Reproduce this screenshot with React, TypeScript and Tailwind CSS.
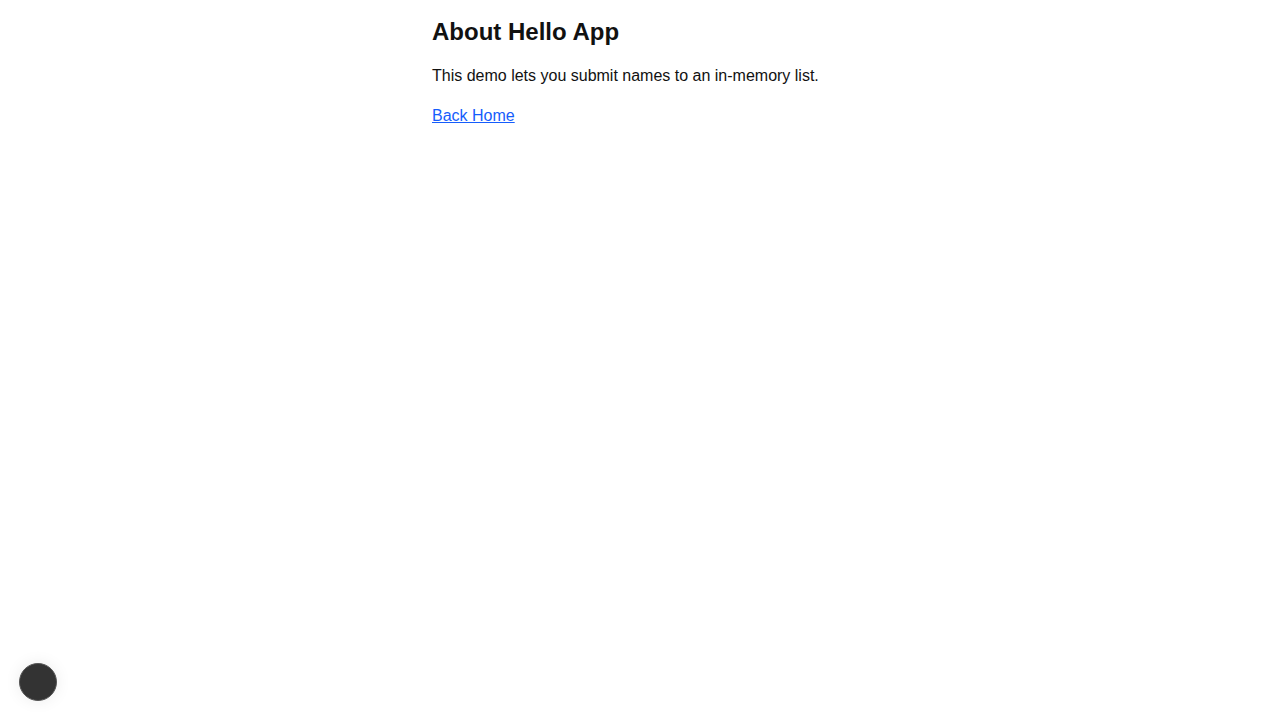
export default function App() {
  return (
    <div className="min-h-screen bg-white font-['Liberation_Sans',Arial,sans-serif] text-[#111]">
      <main className="mx-auto w-[416px] pt-[18px]">
        <h1 className="text-[24px] font-bold leading-[28px]">About Hello App</h1>
        <p className="mt-[21px] text-[16px] leading-[18px]">
          This demo lets you submit names to an in-memory list.
        </p>
        <p className="mt-[22px] text-[16px] leading-[18px]">
          <a href="#" className="text-[#155dfc] underline">
            Back Home
          </a>
        </p>
      </main>
      <button
        aria-label="Open tools"
        className="fixed bottom-[19px] left-[19px] size-[38px] rounded-full border border-[#555] bg-[#333] shadow-[0_0_16px_rgba(0,0,0,0.08)]"
      />
    </div>
  );
}
